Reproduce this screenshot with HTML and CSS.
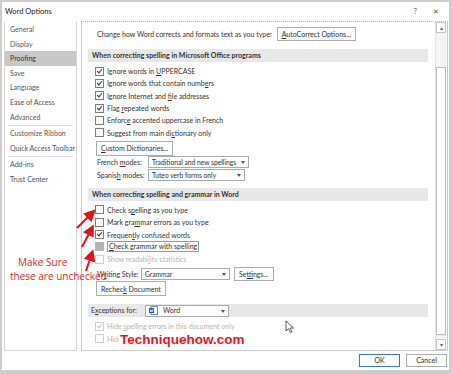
FILE: index.html
```html
<!DOCTYPE html>
<html lang="en">

<head>
  <meta charset="UTF-8">
  <meta name="viewport" content="width=device-width, initial-scale=1.0">
  <title>Word Options</title>
  <link rel="stylesheet" href="styles.css">
</head>

<body>
  <div class="dialog">
    <div class="titlebar">
      <span class="title">Word Options</span>
      <span class="tb-btns"><span>?</span><span class="close">✕</span></span>
    </div>

    <div class="main">
      <ul class="nav">
        <li>General</li>
        <li>Display</li>
        <li class="active">Proofing</li>
        <li>Save</li>
        <li>Language</li>
        <li>Ease of Access</li>
        <li>Advanced</li>
        <li class="sep"></li>
        <li>Customize Ribbon</li>
        <li>Quick Access Toolbar</li>
        <li class="sep"></li>
        <li>Add-ins</li>
        <li>Trust Center</li>
      </ul>

      <div class="panel">
        <div class="content">
          <div class="row intro">
            <span>Change how Word corrects and formats text as you type:</span>
            <span class="btn"><span><u>A</u>utoCorrect Options...</span></span>
          </div>

          <div class="section">When correcting spelling in Microsoft Office programs</div>
          <div class="checks">
            <div class="check"><span class="box on"></span><span>Ignore words in <u>U</u>PPERCASE</span></div>
            <div class="check"><span class="box on"></span><span>Ignore words that contain numb<u>e</u>rs</span></div>
            <div class="check"><span class="box on"></span><span>Ignore Internet and <u>f</u>ile addresses</span></div>
            <div class="check"><span class="box on"></span><span>Flag <u>r</u>epeated words</span></div>
            <div class="check"><span class="box"></span><span>Enforc<u>e</u> accented uppercase in French</span></div>
            <div class="check"><span class="box"></span><span>Suggest from main di<u>c</u>tionary only</span></div>
          </div>
          <span class="btn dict"><span><u>C</u>ustom Dictionaries...</span></span>
          <div class="row mode">
            <span class="lbl">French <u>m</u>odes:</span>
            <span class="select w1"><span class="val">Traditional and new spellings</span></span>
          </div>
          <div class="row mode">
            <span class="lbl">Spanis<u>h</u> modes:</span>
            <span class="select w2"><span class="val">Tuteo verb forms only</span></span>
          </div>

          <div class="section">When correcting spelling and grammar in Word</div>
          <div class="checks">
            <div class="check"><span class="box"></span><span>Check s<u>p</u>elling as you type</span></div>
            <div class="check"><span class="box"></span><span>Mark gra<u>m</u>mar errors as you type</span></div>
            <div class="check"><span class="box on"></span><span>Frequen<u>t</u>ly confused words</span></div>
            <div class="check"><span class="box grey"></span><span class="focus"><u>C</u>heck grammar with spelling</span></div>
            <div class="check off"><span class="box"></span><span>Show readabi<u>l</u>ity statistics</span></div>
          </div>
          <div class="row style">
            <span class="lbl">W<u>r</u>iting Style:</span>
            <span class="select w3"><span class="val">Grammar</span></span>
            <span class="btn"><span>Se<u>t</u>tings...</span></span>
          </div>
          <span class="btn recheck"><span>Rechec<u>k</u> Document</span></span>

          <div class="section exc">
            <span class="lbl">E<u>x</u>ceptions for:</span>
            <span class="select w4">
              <svg class="doc" viewBox="0 0 9 9" width="9" height="9">
                <rect x="2" y="0.5" width="6.5" height="8" fill="#fff" stroke="#6a8fc0" stroke-width="1"/>
                <rect x="0" y="2" width="5" height="5" fill="#2b5797"/>
                <path d="M1 3 L1.8 6 L2.5 4 L3.2 6 L4 3" fill="none" stroke="#fff" stroke-width="0.7"/>
              </svg><span>Word</span>
            </span>
          </div>
          <div class="checks">
            <div class="check off"><span class="box on"></span><span>Hide <u>s</u>pelling errors in this document only</span></div>
            <div class="check off"><span class="box"></span><span>Hide grammar errors in this document only</span></div>
          </div>
        </div>

        <div class="scrollbar">
          <span class="arrow">▴</span>
          <span class="track"><span class="thumb"></span></span>
          <span class="arrow">▾</span>
        </div>
      </div>
    </div>

    <div class="footer">
      <span class="btn ok">OK</span>
      <span class="btn">Cancel</span>
    </div>
  </div>

  <div class="note">
    <div class="l1">Make Sure</div>
    <div>these are unchecked</div>
  </div>

  <svg class="arrows" width="452" height="374" viewBox="0 0 452 374">
    <defs>
      <marker id="head" markerWidth="6" markerHeight="6" refX="4" refY="3" orient="auto">
        <path d="M0 0 L6 3 L0 6 Z" fill="#e8101a"/>
      </marker>
    </defs>
    <line x1="77" y1="228" x2="93" y2="212" stroke="#e8101a" stroke-width="2" marker-end="url(#head)"/>
    <line x1="82" y1="247" x2="92" y2="228" stroke="#e8101a" stroke-width="2" marker-end="url(#head)"/>
    <line x1="86" y1="271" x2="92" y2="253" stroke="#e8101a" stroke-width="2" marker-end="url(#head)"/>
  </svg>

  <div class="watermark">Techniquehow.com</div>

  <svg class="cursor" width="10" height="14" viewBox="0 0 10 14">
    <path d="M1 1 L1 11 L3.5 8.6 L5.3 12.6 L6.9 11.9 L5.1 8 L8.5 8 Z" fill="#fff" stroke="#333" stroke-width="0.8"/>
  </svg>
</body>

</html>
```

FILE: styles.css
```css
body {
  margin: 0;
  padding: 2px 0 0 2px;
  width: 452px;
  height: 374px;
  box-sizing: border-box;
  background: #cdcdcd;
  font-family: Lato, "Liberation Sans", Arial, sans-serif;
  font-size: 7px;
  color: #333;
  overflow: hidden;
  position: relative;
  white-space: nowrap;
}

u {
  text-decoration: underline;
}

.dialog {
  width: 447px;
  height: 368px;
  background: #fff;
  display: flex;
  flex-direction: column;
}

.titlebar {
  height: 19px;
  display: flex;
  align-items: center;
  justify-content: space-between;
  padding: 0 10px 0 3px;
  color: #222;
}

.title {
  font-size: 7.5px;
}

.tb-btns {
  display: flex;
  gap: 16px;
  color: #555;
}

.main {
  height: 330px;
  display: flex;
  gap: 4px;
  padding: 0 1px 0 2px;
}

.nav {
  list-style: none;
  margin: 1px 0 0;
  padding: 0;
  width: 71px;
  border: 1px solid #d6d6d6;
  border-top: none;
  color: #555;
}

.nav li {
  height: 14.6px;
  line-height: 14.6px;
  padding-left: 5px;
}

.nav li.active {
  background: #c8c8c8;
  color: #333;
}

.nav li.sep {
  height: 1px;
  margin: 1px 3px 0;
  background: #dcdcdc;
}

.panel {
  flex: 1;
  display: flex;
  border: 1px solid #c9c9c9;
  border-top: 1px dotted #bbb;
  overflow: hidden;
}

.content {
  flex: 1;
  padding: 4px 6px 0 6px;
}

.row {
  display: flex;
  align-items: center;
}

.intro {
  gap: 5px;
  padding-left: 9px;
  height: 16px;
}

.btn {
  display: inline-flex;
  align-items: center;
  justify-content: center;
  height: 14px;
  padding: 0 4px;
  border: 1px solid #adadad;
  background: #fdfdfd;
  color: #333;
  box-sizing: border-box;
}

.section {
  margin-top: 7px;
  height: 13px;
  line-height: 13px;
  padding-left: 4px;
  background: #e8e8e8;
  font-weight: bold;
  color: #333;
  margin-right: 1px;
}

.checks {
  padding: 3px 0 0 7px;
}

.check {
  height: 12.3px;
  display: flex;
  align-items: center;
  gap: 3px;
}

.check.off {
  color: #b4b4b4;
}

.box {
  width: 7px;
  height: 7px;
  border: 1px solid #7d7d7d;
  background: #fff;
  position: relative;
}

.off .box {
  border-color: #cfcfcf;
}

.box.on::after {
  content: "";
  position: absolute;
  left: 2px;
  top: 0;
  width: 2px;
  height: 4px;
  border: solid #333;
  border-width: 0 1px 1px 0;
  transform: rotate(40deg);
}

.off .box.on::after {
  border-color: #c4c4c4;
}

.box.grey {
  background: #b3b3b3;
  border-color: #b3b3b3;
}

.focus {
  border: 1px solid #9a9a9a;
  padding: 0 1px;
  line-height: 9px;
}

.dict {
  margin: 2px 0 0 8px;
  height: 15px;
}

.mode {
  height: 12.5px;
  padding-left: 9px;
}

.mode .lbl {
  width: 51px;
}

.select {
  display: flex;
  align-items: center;
  height: 12px;
  padding: 0 10px 0 3px;
  border: 1px solid #ababab;
  background: #fff;
  color: #333;
  box-sizing: border-box;
  position: relative;
}

.select .val {
  font-size: 6.7px;
}

.select::after {
  content: "";
  position: absolute;
  right: 3px;
  top: 4px;
  border: 2.5px solid transparent;
  border-top: 3px solid #555;
}

.w1 { width: 101px; }
.w2 { width: 97px; }
.w3 { width: 89px; }
.w4 { width: 84px; font-weight: normal; }

.style {
  margin-top: 1px;
  height: 15px;
  padding-left: 9px;
  gap: 4px;
}

.style .lbl {
  width: 40px;
}

.recheck {
  margin: 0 0 0 8px;
  height: 15px;
}

.exc {
  display: flex;
  align-items: center;
  gap: 6px;
  margin-top: 8px;
  padding-left: 3px;
  font-weight: normal;
}

.exc .lbl {
  width: 48px;
}

.doc {
  margin-right: 5px;
}

.scrollbar {
  width: 10px;
  margin-right: 1px;
  display: flex;
  flex-direction: column;
  background: #f0f0f0;
  border-left: 1px solid #e4e4e4;
}

.arrow {
  height: 9px;
  font-size: 6px;
  line-height: 9px;
  text-align: center;
  color: #666;
  border: 1px solid #c4c4c4;
  background: #fdfdfd;
}

.track {
  flex: 1;
  padding: 34px 0 4px;
  background: repeating-linear-gradient(#eee 0 1px, #f7f7f7 1px 2px);
  display: flex;
}

.thumb {
  flex: 1;
  background: #fff;
  border: 1px solid #bdbdbd;
}

.footer {
  height: 18px;
  display: flex;
  justify-content: flex-end;
  align-items: center;
  gap: 6px;
  padding-right: 2px;
}

.footer .btn {
  width: 41px;
  height: 13px;
}

.footer .ok {
  border-color: #3d7ab8;
}

.note {
  position: absolute;
  left: 10px;
  top: 255px;
  color: #e8262f;
  font-family: "Open Sans", "Noto Sans", sans-serif;
  font-size: 10px;
  line-height: 14px;
}

.note .l1 {
  padding-left: 8px;
}

.arrows {
  position: absolute;
  left: 0;
  top: 0;
  pointer-events: none;
}

.watermark {
  position: absolute;
  left: 119px;
  top: 332px;
  padding: 0 1px;
  background: #fff;
  color: #f0141e;
  font-family: "Liberation Sans", Arial, sans-serif;
  font-weight: bold;
  font-size: 13.5px;
  line-height: 15px;
}

.cursor {
  position: absolute;
  left: 285px;
  top: 320px;
}
```
